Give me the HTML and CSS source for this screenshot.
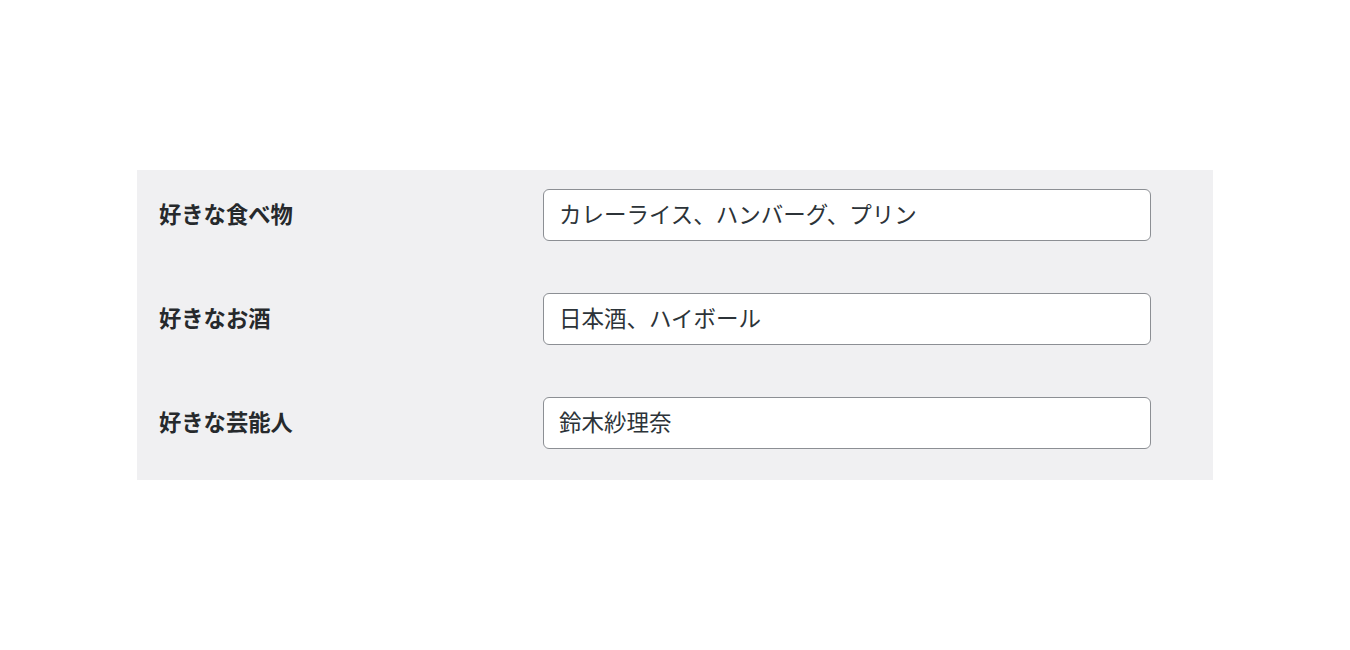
FILE: index.html
```html
<!DOCTYPE html>
<html lang="ja">
<head>
<meta charset="utf-8">
<link rel="stylesheet" href="styles.css">
</head>
<body>
<div class="page">
  <form class="panel">
    <div class="row">
      <label class="label" for="f1">好きな食べ物</label>
      <input class="field" id="f1" type="text" value="カレーライス、ハンバーグ、プリン">
    </div>
    <div class="row">
      <label class="label" for="f2">好きなお酒</label>
      <input class="field" id="f2" type="text" value="日本酒、ハイボール">
    </div>
    <div class="row">
      <label class="label" for="f3">好きな芸能人</label>
      <input class="field" id="f3" type="text" value="鈴木紗理奈">
    </div>
  </form>
</div>
</body>
</html>
```
FILE: styles.css
```css
html, body {
  margin: 0;
  padding: 0;
  background: #ffffff;
}
body {
  font-family: "Noto Sans CJK JP", "Noto Sans", sans-serif;
  color: #1d2327;
}
.page {
  width: 1350px;
  height: 650px;
  padding-top: 170px;
  box-sizing: border-box;
}
.panel {
  margin: 0 0 0 137px;
  width: 1076px;
  height: 310px;
  box-sizing: border-box;
  background: #f0f0f2;
  padding: 19px 62px 0 22px;
  display: flex;
  flex-direction: column;
  gap: 52px;
}
.row {
  display: flex;
  align-items: center;
  height: 52px;
}
.label {
  width: 384px;
  flex: none;
  font-size: 22.3px;
  font-weight: 700;
  color: #26292c;
  line-height: 1;
  padding-bottom: 4px;
}
.field {
  flex: 1;
  height: 52px;
  box-sizing: border-box;
  margin: 0;
  border: 1.5px solid #8c8f94;
  border-radius: 6px;
  background: #ffffff;
  padding: 0 15px 4px;
  font-family: "Noto Sans CJK JP", "Noto Sans", sans-serif;
  font-size: 22.5px;
  color: #2c3338;
  outline: none;
}
```
